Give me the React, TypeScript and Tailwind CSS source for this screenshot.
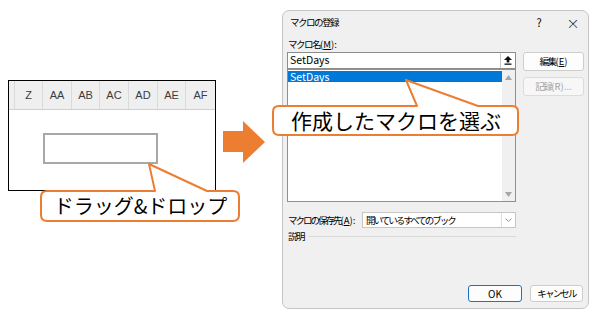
import React from 'react';

const cols = ['Z', 'AA', 'AB', 'AC', 'AD', 'AE', 'AF'];
const colWidths = ['w-[28px]', 'w-[29px]', 'w-[28px]', 'w-[29px]', 'w-[29px]', 'w-[28px]', 'flex-1'];

function SheetPanel() {
  return (
    <div className="mt-[80px] ml-[8px] w-[208px] h-[111px] border border-black bg-white flex flex-col shrink-0">
      {/* column headers */}
      <div className="h-[29px] flex bg-[#efefef] border-b border-[#cfcfcf] font-['Liberation_Sans',Arial,sans-serif] text-[11px] text-[#3c3c3c]">
        <div className="w-[5px]" />
        {cols.map((c, i) => (
          <div key={c} className={`${colWidths[i]} border-l border-[#dadada] flex items-center justify-center`}>
            {c}
          </div>
        ))}
      </div>
      <div className="flex-1">
        <div className="mt-[23px] ml-[34px] w-[115px] h-[31px] border-2 border-[#a8a8a8] bg-white" />
      </div>
    </div>
  );
}

function Arrow() {
  return (
    <svg className="mt-[121px] ml-[7px] shrink-0" width="43" height="43" viewBox="0 0 43 43">
      <rect x="0" y="10" width="21" height="21" fill="#ED7D31" />
      <polygon points="20,0 42,21 20,42" fill="#ED7D31" />
    </svg>
  );
}

function Tri({ up }: { up?: boolean }) {
  return (
    <svg width="7" height="5" viewBox="0 0 7 5">
      <polygon points={up ? '0,5 3.5,0 7,5' : '0,0 3.5,5 7,0'} fill="#a6a6a6" />
    </svg>
  );
}

// narrow Japanese UI text (dialog font is much more condensed than Noto)
function J({ children, tight }: { children: React.ReactNode; tight?: boolean }) {
  return <span className={tight ? 'tracking-[-2px]' : 'tracking-[-1.5px]'}>{children}</span>;
}

const jp = "font-['Noto_Sans_CJK_JP',sans-serif]";

function MacroDialog() {
  return (
    <div className={`mt-[10px] ml-[16px] w-[307px] h-[299px] shrink-0 border border-[#c4c4c4] rounded-[7px] bg-[#f0f0f0] flex flex-col ${jp} text-[9.5px] text-black`}>
      {/* title bar */}
      <div className="h-[22px] flex items-center pl-[7px] pr-[5px]">
        <J>マクロの登録</J>
        <span className="ml-auto w-[20px] text-center text-[11px]">?</span>
        <span className="ml-[14px] w-[20px] text-center text-[13px] font-light leading-none">×</span>
      </div>

      <div className="flex-1 flex flex-col pl-[4px] pr-[4px]">
        <div className="h-[19px] pt-[3px] pl-[1px] flex items-center">
          <J>マクロ名</J>
          <span>(<span className="underline">M</span>):</span>
        </div>

        <div className="flex gap-[7px]">
          <div className="w-[229px] flex flex-col">
            {/* name input */}
            <div className="h-[17px] border border-[#8c8c8c] bg-white flex items-center">
              <span className="pl-[2px] text-[10.5px] leading-none">SetDays</span>
              <div className="ml-auto w-[15px] h-full border-l border-[#c8c8c8] flex items-center justify-center">
                <svg width="8" height="9" viewBox="0 0 8 9">
                  <polygon points="4,0 8,4 5.3,4 5.3,6.5 2.7,6.5 2.7,4 0,4" fill="#111" />
                  <rect x="0.5" y="7.5" width="7" height="1.3" fill="#111" />
                </svg>
              </div>
            </div>
            {/* macro list */}
            <div className="h-[133px] border border-[#8e9096] bg-white flex">
              <div className="flex-1 pt-[1px]">
                <div className="h-[11px] bg-[#0078d7] text-white text-[10.5px] leading-[11px] pl-[2px]">SetDays</div>
              </div>
              <div className="w-[13px] bg-[#f0f0f0] flex flex-col items-center justify-between pt-[5px] pb-[4px]">
                <Tri up />
                <Tri />
              </div>
            </div>
          </div>

          <div className="w-[61px] flex flex-col gap-[6px]">
            <div className="h-[19px] rounded-[3px] border border-[#cdcdcd] bg-[#fdfdfd] flex items-center justify-center">
              <J>編集</J>
              <span>(<span className="underline">E</span>)</span>
            </div>
            <div className="h-[19px] rounded-[3px] border border-[#dcdcdc] bg-[#f7f7f7] flex items-center justify-center text-[#a3a3a3]">
              <J>記録</J>
              <span>(R)...</span>
            </div>
          </div>
        </div>

        {/* save location */}
        <div className="mt-[10px] h-[16px] flex items-center">
          <div className="w-[75px] pl-[1px] whitespace-nowrap">
            <J tight>マクロの保存先</J>
            <span>(<span className="underline">A</span>):</span>
          </div>
          <div className="w-[154px] h-full border border-[#c6c6c6] bg-white flex items-center">
            <span className="pl-[3px] tracking-[-2px]">開いているすべてのブック</span>
            <div className="ml-auto w-[14px] h-full border-l border-[#dedede] flex items-center justify-center">
              <svg width="7" height="4" viewBox="0 0 7 4">
                <polyline points="0.5,0.5 3.5,3.5 6.5,0.5" fill="none" stroke="#8a8a8a" strokeWidth="0.9" />
              </svg>
            </div>
          </div>
        </div>

        {/* description */}
        <div className="mt-[2px] h-[12px] flex items-center pl-[1px]">
          <J>説明</J>
          <div className="ml-[4px] w-[208px] h-px bg-[#d9d9d9]" />
        </div>

        <div className="flex-1" />

        <div className="flex justify-end gap-[8px] pb-[6px] pr-[1px]">
          <div className="w-[54px] h-[17px] rounded-[3px] border-[1.5px] border-[#1a73c8] bg-[#fdfdfd] flex items-center justify-center text-[10px]">
            OK
          </div>
          <div className="w-[53px] h-[17px] rounded-[3px] border border-[#cdcdcd] bg-[#fdfdfd] flex items-center justify-center">
            <span className="tracking-[-1.8px]">キャンセル</span>
          </div>
        </div>
      </div>
    </div>
  );
}

export default function App() {
  return (
    <div className="relative w-[595px] h-[319px] bg-white overflow-hidden flex items-start">
      <SheetPanel />
      <Arrow />
      <MacroDialog />

      {/* callout: drag & drop */}
      <div className="absolute left-[40px] top-[160px] w-[201px] h-[63px]">
        <svg className="absolute inset-0" width="201" height="63" viewBox="0 0 201 63">
          <path
            d="M7 31 H115 L109 4 L167 31 H193 Q199 31 199 37 V55 Q199 61 193 61 H7 Q1 61 1 55 V37 Q1 31 7 31 Z"
            fill="#fff"
            stroke="#ED7D31"
            strokeWidth="2"
            strokeLinejoin="round"
          />
        </svg>
        <div className={`absolute left-0 right-0 top-[31px] h-[30px] flex items-center justify-center ${jp} text-[20px] text-black leading-none`}>
          ドラッグ&amp;ドロップ
        </div>
      </div>

      {/* callout: choose macro */}
      <div className="absolute left-[272px] top-[78px] w-[248px] h-[59px]">
        <svg className="absolute inset-0" width="248" height="59" viewBox="0 0 248 59">
          <path
            d="M7 28 H145 L134 2 L206 28 H240 Q246 28 246 34 V51 Q246 57 240 57 H7 Q1 57 1 51 V34 Q1 28 7 28 Z"
            fill="#fff"
            stroke="#ED7D31"
            strokeWidth="2"
            strokeLinejoin="round"
          />
        </svg>
        <div className={`absolute left-0 right-0 top-[28px] h-[29px] flex items-center justify-center ${jp} text-[21px] text-black leading-none`}>
          作成したマクロを選ぶ
        </div>
      </div>
    </div>
  );
}
